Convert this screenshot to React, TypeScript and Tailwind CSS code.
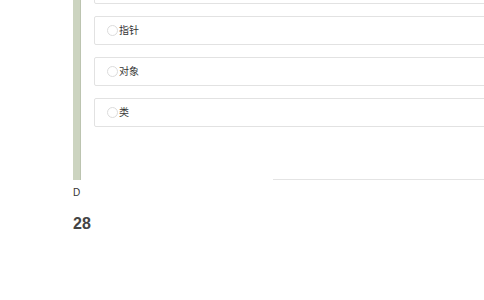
import React from "react";

const options = ["", "指针", "对象", "类"];

function OptionCard({ label }: { label: string }) {
  return (
    <div className="flex items-center h-[29px] w-[420px] border border-[#e2e2e2] rounded-[2px] bg-white pl-[12px]">
      <span className="w-[11px] h-[11px] rounded-full border border-[#dcdcdc] bg-white shrink-0" />
      <span className="text-[10px] leading-none text-[#333] ml-px">{label}</span>
    </div>
  );
}

export default function App() {
  return (
    <div
      className="w-[484px] h-[300px] overflow-hidden bg-white pl-[73px]"
      style={{ fontFamily: '"Liberation Sans", "Noto Sans CJK SC", sans-serif' }}
    >
      {/* 题目区 */}
      <div className="flex h-[180px]">
        <div className="w-[8px] h-full bg-[#ccd4c0] border-r border-[#bcc4b0] shrink-0" />
        <div className="relative ml-[13px] flex-1">
          <div className="flex flex-col gap-[12px] -mt-[25px]">
            {options.map((o, i) => (
              <OptionCard key={i} label={o} />
            ))}
          </div>
          <div className="absolute left-[179px] right-0 bottom-0 border-t border-[#e4e4e4]" />
        </div>
      </div>

      {/* 答案 */}
      <p className="mt-[7px] text-[10px] leading-[12px] text-[#333]">D</p>
      <p className="mt-[16px] text-[16px] leading-[18px] font-bold text-[#444]">28</p>
    </div>
  );
}
